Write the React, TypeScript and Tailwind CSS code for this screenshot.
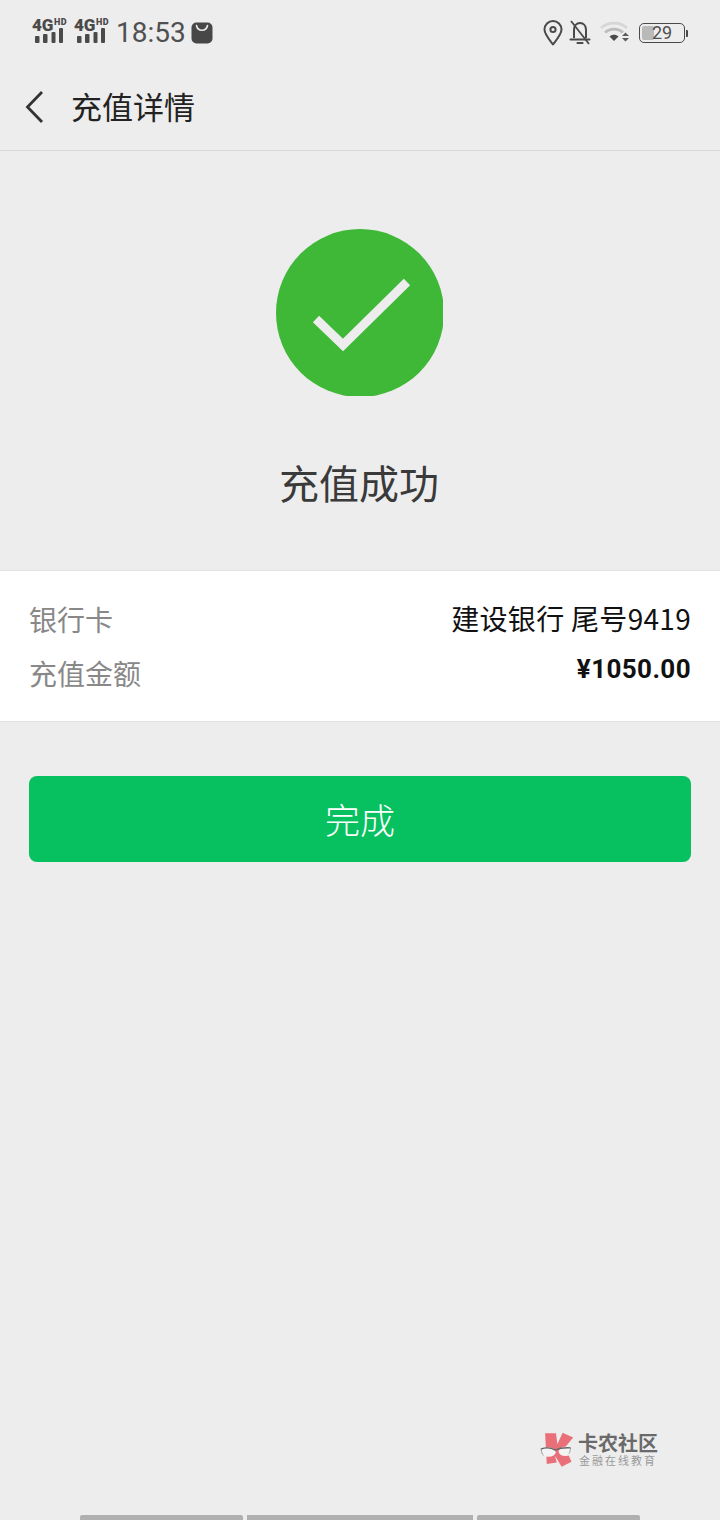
function SignalIcon() {
  return (
    <div className="flex h-[28px] w-[34px] flex-col">
      <div className="flex h-[15px] items-start font-black text-[#4a4a4a] font-['Roboto',sans-serif]">
        <span className="text-[17px] leading-[13px] tracking-[-0.2px]">4G</span>
        <span className="ml-[1px] text-[9px] leading-[7px] tracking-[0.4px]">HD</span>
      </div>
      <svg width="34" height="16" viewBox="0 0 34 16" className="mt-[-7px]">
        <rect x="3" y="9" width="4.500" height="7" rx="1" fill="#4a4a4a" />
        <rect x="11" y="7" width="4.500" height="9" rx="1" fill="#4a4a4a" />
        <rect x="19.500" y="5" width="4" height="11" rx="1" fill="#4a4a4a" />
        <rect x="27" y="1" width="4" height="15" rx="1" fill="#4a4a4a" />
      </svg>
    </div>
  );
}

function StatusBar() {
  return (
    <div className="flex h-[66px] items-center justify-between pl-[32px] pr-[32px]">
      <div className="flex items-center">
        <SignalIcon />
        <div className="ml-[8px]">
          <SignalIcon />
        </div>
        <span className="ml-[8px] text-[28px] leading-[34px] text-[#505050] font-['Roboto',sans-serif]">
          18:53
        </span>
        <svg width="22" height="22" viewBox="0 0 22 22" className="ml-[5px]">
          <rect x="0.5" y="0.5" width="21" height="21" rx="5" fill="#474747" />
          <path
            d="M5.5 3.5c.6 3.2 2.6 4.8 5.5 4.8s4.900-1.600 5.500-4.800"
            fill="none"
            stroke="#ececec"
            strokeWidth="1.6"
            strokeLinecap="round"
          />
        </svg>
      </div>
      <div className="flex items-center">
        <svg width="20" height="26" viewBox="0 0 20 26">
          <path
            d="M10 24.500C5 18 1.500 14 1.500 9.500a8.500 8.500 0 0 1 17 0C18.500 14 15 18 10 24.500z"
            fill="none"
            stroke="#4a4a4a"
            strokeWidth="2"
            strokeLinejoin="round"
          />
          <circle cx="10" cy="9.500" r="2.600" fill="none" stroke="#4a4a4a" strokeWidth="2" />
        </svg>
        <svg width="22" height="26" viewBox="0 0 22 26" className="ml-[6px]">
          <path
            d="M5 18V10c0-4 2.500-7 6-7s6 3 6 7v8"
            fill="none"
            stroke="#4a4a4a"
            strokeWidth="2"
          />
          <path d="M1.500 19.500h19" stroke="#4a4a4a" strokeWidth="2" strokeLinecap="round" />
          <path d="M8.500 23h5" stroke="#4a4a4a" strokeWidth="2.200" strokeLinecap="round" />
          <path d="M2 1l18 23" stroke="#4a4a4a" strokeWidth="1.800" />
        </svg>
        <svg width="30" height="24" viewBox="0 0 30 24" className="ml-[9px]">
          <path d="M1 7c7-6.500 19-6.500 26 0" fill="none" stroke="#d6d6d6" strokeWidth="2.600" />
          <path d="M5 11.500c5-4.500 13-4.500 18 0" fill="none" stroke="#bdbdbd" strokeWidth="2.600" />
          <path d="M9.500 15.500c2.500-2.200 6.500-2.200 9 0l-4.500 4.500z" fill="#4a4a4a" />
          <path d="M22 15l3.500-3.500 3.500 3.500zM22 17l3.500 3.500 3.500-3.500z" fill="#5a5a5a" />
        </svg>
        <div className="ml-[9px] flex items-center">
          <div className="flex h-[20px] w-[46px] items-center rounded-[5px] border border-[#4a4a4a] pl-[2px]">
            <div className="h-[14px] w-[12px] rounded-[2px] bg-[#b9b9b9]" />
            <span className="ml-[-2px] text-[18px] leading-[18px] text-[#505050] font-['Roboto',sans-serif]">
              29
            </span>
          </div>
          <div className="ml-[1px] h-[7px] w-[2px] rounded-r-[1px] bg-[#4a4a4a]" />
        </div>
      </div>
    </div>
  );
}

function Row({ label, children }: { label: string; children: React.ReactNode }) {
  return (
    <div className="flex h-[54px] items-center justify-between">
      <span className="mt-[-1px] leading-[40px] text-[#888888]">{label}</span>
      {children}
    </div>
  );
}

function WatermarkLogo() {
  return (
    <svg width="35" height="37" viewBox="60 35 105 112">
      <path
        d="M75 42h33l4 33 16-35 32 15-25 30 20 43-30 15-20-33 5 20-30 5z"
        fill="#e96f79"
      />
      <ellipse cx="85" cy="99" rx="22" ry="14" fill="#f3f3f3" />
      <ellipse cx="136" cy="97" rx="20" ry="14" fill="#f3f3f3" />
      <path
        d="M62 90c12-5 30-5 44 3 10-5 28-8 46-7"
        fill="none"
        stroke="#666666"
        strokeWidth="4"
      />
      <path d="M63 91c1 8 3 14 7 18M152 86c0 7-2 13-5 18" fill="none" stroke="#888888" strokeWidth="2.500" />
    </svg>
  );
}

export default function App() {
  return (
    <div className="flex h-[1520px] w-[720px] flex-col overflow-hidden bg-[#ededed] font-['Noto_Sans_CJK_SC','Noto_Sans',sans-serif]">
      <StatusBar />

      <div className="flex h-[85px] items-center border-b border-[#d8d8d8] pl-[26px]">
        <svg width="20" height="34" viewBox="0 0 20 34" className="ml-[-1px] mt-[-3px]">
          <path d="M17 2L2.500 17 17 32" fill="none" stroke="#333333" strokeWidth="2.800" />
        </svg>
        <span className="ml-[26px] mt-[-4px] text-[31px] leading-[40px] text-[#222222]">充值详情</span>
      </div>

      <div className="flex flex-col items-center pt-[78px]">
        <svg width="167" height="167" viewBox="0 0 167 167" className="ml-[-1px]">
          <circle cx="84" cy="84" r="84" fill="#3fb838" />
          <path d="M40 90l27 26 64-63" fill="none" stroke="#ededed" strokeWidth="9" />
        </svg>
        <h1 className="ml-[-2px] mt-[58px] text-[40px] leading-[56px] font-normal text-[#3a3a3a]">充值成功</h1>
      </div>

      <div className="mt-[60px] flex h-[152px] flex-col justify-center border-y border-[#e0e0e0] bg-white px-[29px] text-[28px]">
        <Row label="银行卡">
          <span className="mt-[-2px] leading-[40px] tracking-[0.3px] text-[#111111]">建设银行 尾号9419</span>
        </Row>
        <Row label="充值金额">
          <span className="mt-[-9px] text-[26px] leading-[40px] font-bold text-[#111111] font-['Roboto',sans-serif] tracking-[0.4px]">
            ¥1050.00
          </span>
        </Row>
      </div>

      <div className="mt-[54px] px-[29px]">
        <button className="flex h-[86px] w-full items-center justify-center rounded-[8px] bg-[#07c160] text-[35px] font-light text-white">
          完成
        </button>
      </div>

      <div className="flex-1" />

      <div className="flex items-center justify-end pr-[62px]">
        <WatermarkLogo />
        <div className="ml-[3px] flex flex-col items-center">
          <span className="text-[20px] leading-[20px] font-bold text-[#6a6a6a]">卡农社区</span>
          <span className="mt-[1px] text-[11px] leading-[13px] tracking-[2px] text-[#9a9a9a]">金融在线教育</span>
        </div>
      </div>

      <div className="mt-[47px] flex h-[5px] gap-[4px] px-[80px]">
        <div className="w-[163px] rounded-t-[2px] bg-[#b0b0b0]" />
        <div className="w-[226px] bg-[#b0b0b0]" />
        <div className="w-[163px] rounded-t-[2px] bg-[#b0b0b0]" />
      </div>
    </div>
  );
}
